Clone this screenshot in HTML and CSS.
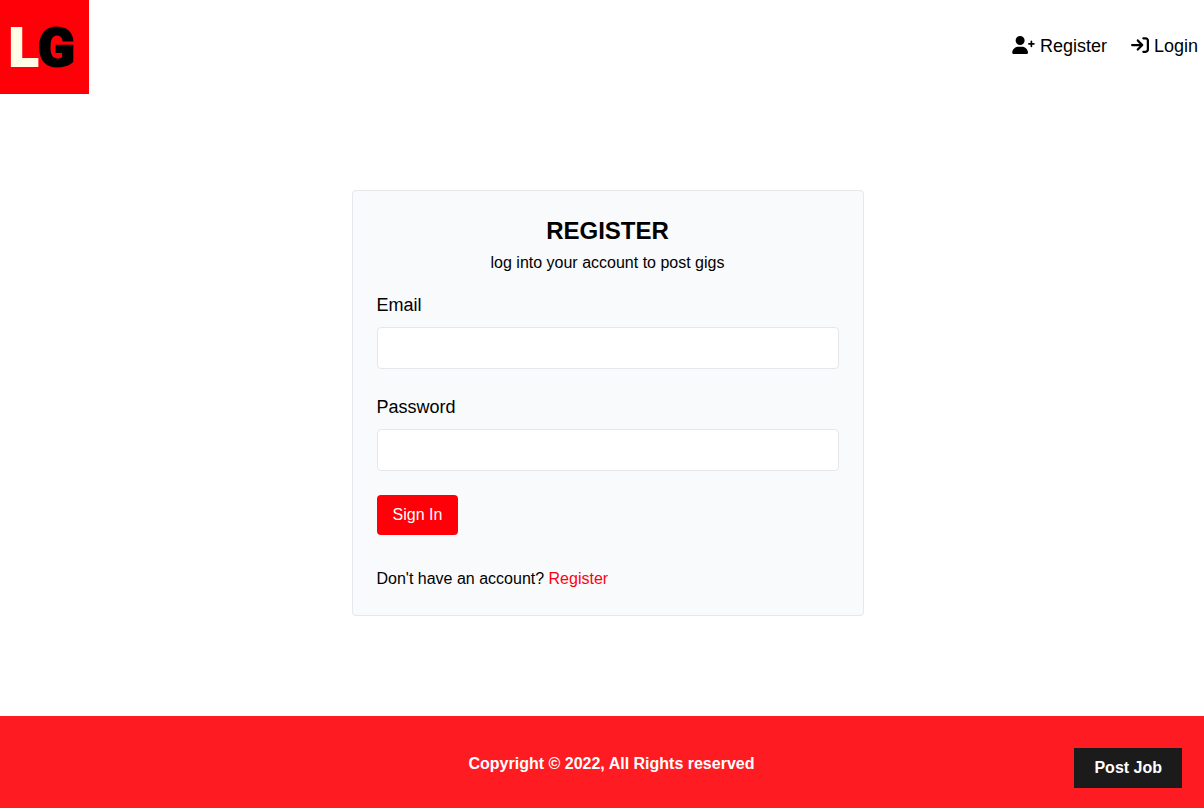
FILE: index.html
```html
<!DOCTYPE html>
<html lang="en">
<head>
  <meta charset="utf-8">
  <meta name="viewport" content="width=device-width, initial-scale=1">
  <title>LaraGigs</title>
  <link rel="stylesheet" href="styles.css">
</head>
<body>
  <nav class="navbar">
    <a class="logo" href="#" aria-label="Home">
      <svg class="logo-mark" viewBox="0 0 89 94" role="img" aria-label="LG">
        <rect width="89" height="94" fill="#ff0008"/>
        <text class="logo-l" x="9" y="66">L</text>
        <text class="logo-g" x="38" y="66">G</text>
      </svg>
    </a>
    <ul class="nav-links">
      <li><a href="#"><svg class="icon icon-user" viewBox="0 0 640 512" aria-hidden="true"><path d="M224 256A128 128 0 1 0 224 0a128 128 0 0 0 0 256zm50.700 48H173.300C77.610 304 0 381.600 0 477.300 0 496.500 15.520 512 34.660 512h378.700c19.140 0 34.660-15.500 34.660-34.700C448 381.600 370.400 304 274.700 304zM616 200h-48v-48c0-13.300-10.700-24-24-24s-24 10.700-24 24v48h-48c-13.300 0-24 10.700-24 24s10.700 24 24 24h48v48c0 13.300 10.700 24 24 24s24-10.700 24-24v-48h48c13.300 0 24-10.700 24-24s-10.700-24-24-24z"/></svg> Register</a></li>
      <li><a href="#"><svg class="icon" viewBox="0 0 512 512" aria-hidden="true"><path d="M352 96h64c17.700 0 32 14.300 32 32v256c0 17.700-14.300 32-32 32h-64c-17.700 0-32 14.300-32 32s14.300 32 32 32h64c53 0 96-43 96-96V128c0-53-43-96-96-96h-64c-17.700 0-32 14.300-32 32s14.300 32 32 32zm-9.400 182.600c12.500-12.500 12.500-32.800 0-45.300l-128-128c-12.500-12.500-32.800-12.500-45.300 0s-12.500 32.800 0 45.300l73.400 73.400H32c-17.700 0-32 14.300-32 32s14.300 32 32 32h210.700l-73.400 73.400c-12.500 12.500-12.500 32.800 0 45.300s32.800 12.500 45.300 0l128-128z"/></svg> Login</a></li>
    </ul>
  </nav>

  <main class="content">
    <section class="card">
      <header class="card-header">
        <h1>REGISTER</h1>
        <p>log into your account to post gigs</p>
      </header>
      <form action="#">
        <div class="field">
          <label for="email">Email</label>
          <input type="email" id="email" name="email">
        </div>
        <div class="field">
          <label for="password">Password</label>
          <input type="password" id="password" name="password">
        </div>
        <button class="submit" type="submit">Sign In</button>
        <p class="switch">Don't have an account? <a href="#">Register</a></p>
      </form>
    </section>
  </main>

  <footer class="footer">
    <p>Copyright © 2022, All Rights reserved</p>
    <a class="post-job" href="#">Post Job</a>
  </footer>
</body>
</html>
```
FILE: styles.css
```css
*,
*::before,
*::after {
  box-sizing: border-box;
}

body {
  display: flex;
  flex-direction: column;
  min-height: 100vh;
  margin: 0;
  background: #fff;
  color: #000;
  font: 16px/24px "Liberation Sans", Arial, sans-serif;
}

h1,
p,
ul {
  margin: 0;
  padding: 0;
}

a {
  color: inherit;
  text-decoration: none;
}

.navbar {
  display: flex;
  justify-content: space-between;
  align-items: center;
}

.logo,
.logo-mark {
  display: block;
}

.logo-mark {
  width: 89px;
  height: 94px;
}

.logo-l,
.logo-g {
  font: 900 54px Roboto, "Liberation Sans", sans-serif;
  stroke-width: 2px;
}

.logo-l {
  fill: #fffde6;
  stroke: #fffde6;
}

.logo-g {
  fill: #000;
  stroke: #000;
}

.nav-links {
  display: flex;
  gap: 24px;
  padding: 0 6px 2px 0;
  list-style: none;
  font-size: 18px;
  line-height: 28px;
}

.icon {
  width: 18px;
  height: 18px;
  vertical-align: -2px;
  fill: currentColor;
}

.icon-user {
  width: 23px;
}

.content {
  display: flex;
  flex: 1;
  justify-content: center;
  align-items: flex-start;
  padding: 96px 0 100px 11px;
}

.card {
  width: 100%;
  max-width: 512px;
  padding: 24px;
  border: 1px solid #e5e7eb;
  border-radius: 4px;
  background: #f9fafc;
}

.card-header {
  margin-bottom: 16px;
  text-align: center;
}

.card-header h1 {
  margin-bottom: 4px;
  font-size: 24px;
  line-height: 32px;
}

.field {
  margin-bottom: 24px;
}

.field label {
  display: block;
  margin-bottom: 8px;
  font-size: 18px;
  line-height: 28px;
}

.field input {
  display: block;
  width: 100%;
  height: 42px;
  padding: 8px;
  border: 1px solid #e5e7eb;
  border-radius: 4px;
  background: #fff;
  font: inherit;
}

.submit {
  display: block;
  padding: 8px 16px;
  border: 0;
  border-radius: 4px;
  background: #ff0008;
  color: #fff;
  font: inherit;
}

.switch {
  margin-top: 32px;
}

.switch a {
  color: #ff0010;
}

.footer {
  display: grid;
  grid-template-columns: 1fr auto 1fr;
  align-items: start;
  padding: 32px 22px 20px 41px;
  background: #ff1b22;
  color: #fff;
  font-weight: bold;
}

.footer p {
  grid-column: 2;
  padding: 4px 0;
}

.post-job {
  grid-column: 3;
  justify-self: end;
  padding: 8px 20px;
  background: #1b1b1b;
}
```
